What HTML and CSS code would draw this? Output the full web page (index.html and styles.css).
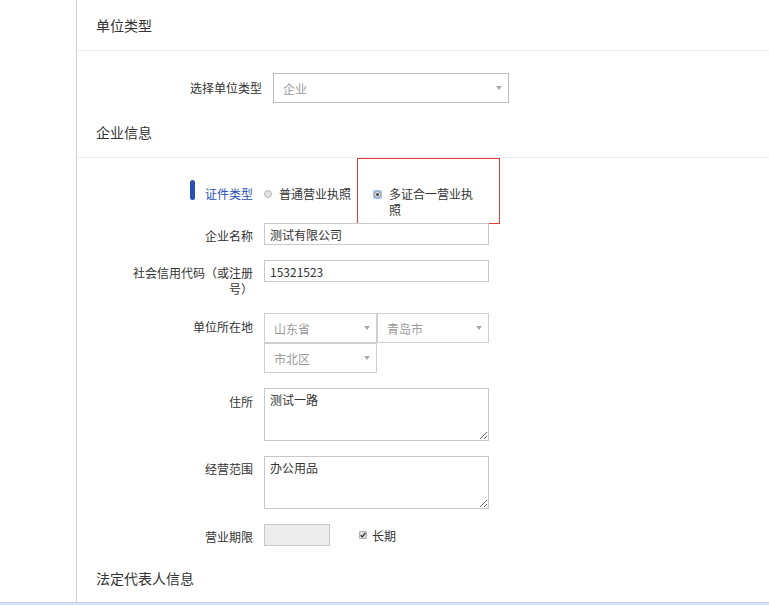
FILE: index.html
```html
<!DOCTYPE html>
<html lang="zh-CN">
<head>
<meta charset="utf-8">
<title>单位信息</title>
<link rel="stylesheet" href="styles.css">
</head>
<body>
<div class="page">
  <div class="gutter"></div>
  <div class="main">
    <div class="section-title">单位类型</div>

    <div class="row row-type">
      <div class="label label-wide">选择单位类型</div>
      <div class="select select-type"><span class="placeholder">企业</span><span class="caret"></span></div>
    </div>

    <div class="section-title title-company">企业信息</div>

    <div class="row row-cert">
      <div class="label label-cert"><span class="mark"></span><span>证件类型</span></div>
      <div class="opt opt-plain"><span class="radio"></span><span>普通营业执照</span></div>
      <div class="opt-hl">
        <svg class="radio-on" width="9" height="9" viewBox="0 0 9 9"><rect x="0" y="0" width="9" height="9" rx="2" fill="#a3c3ef"/><circle cx="4.5" cy="4.5" r="3" fill="#e6e6e6" stroke="#8a8a8a" stroke-width="0.8"/><circle cx="4.5" cy="4.5" r="1.5" fill="#444"/></svg>
        <span class="opt-text">多证合一营业执照</span>
      </div>
    </div>

    <div class="row row-name">
      <div class="label">企业名称</div>
      <input class="text-input" type="text" value="测试有限公司">
    </div>

    <div class="row row-credit">
      <div class="label">社会信用代码（或注册号）</div>
      <input class="text-input" type="text" value="15321523">
    </div>

    <div class="row row-loc">
      <div class="label">单位所在地</div>
      <div class="loc-wrap">
        <div class="select sel-a"><span class="placeholder">山东省</span><span class="caret"></span></div>
        <div class="select sel-b"><span class="placeholder">青岛市</span><span class="caret"></span></div>
        <div class="select sel-a"><span class="placeholder">市北区</span><span class="caret"></span></div>
      </div>
    </div>

    <div class="row row-addr">
      <div class="label">住所</div>
      <textarea class="text-area">测试一路</textarea>
    </div>

    <div class="row row-scope">
      <div class="label">经营范围</div>
      <textarea class="text-area">办公用品</textarea>
    </div>

    <div class="row row-term">
      <div class="label">营业期限</div>
      <input class="term-input" type="text" value="">
      <div class="long-term">
        <span class="check"><svg width="6" height="6" viewBox="0 0 6 6"><path d="M0.6 3.2 L2.3 4.9 L5.4 1" stroke="#333" stroke-width="1.3" fill="none"/></svg></span>
        <span>长期</span>
      </div>
    </div>

    <div class="section-title title-legal">法定代表人信息</div>
  </div>
</div>
<div class="strip"></div>
</body>
</html>
```

FILE: styles.css
```css
* { box-sizing: border-box; }

html, body {
  margin: 0;
  padding: 0;
  background: #fff;
}

body {
  font-family: "Noto Sans CJK SC", "Liberation Sans", sans-serif;
  font-size: 12px;
  color: #333;
  overflow: hidden;
}

.page {
  display: flex;
  height: 602px;
  overflow: hidden;
}

.gutter {
  width: 76px;
  flex: none;
}

.main {
  flex: 1;
  border-left: 1px solid #d2d2d2;
  display: flex;
  flex-direction: column;
}

.section-title {
  flex: none;
  height: 51px;
  line-height: 50px;
  padding-left: 19px;
  font-size: 14px;
  color: #333;
  border-bottom: 1px solid #ececec;
}

.title-company { margin-top: 4px; }
.title-legal { margin-top: 7px; }

.row {
  display: flex;
  flex: none;
  gap: 11px;
  align-items: flex-start;
}

.label {
  width: 176px;
  flex: none;
  padding-left: 50px;
  text-align: right;
  line-height: 16px;
  color: #333;
}

.label-wide { width: 185px; }

/* select-type row */
.row-type { margin-top: 22px; }
.row-type .label { padding-top: 7px; }

.select {
  display: flex;
  align-items: center;
  height: 30px;
  border: 1px solid #cfcfcf;
  padding: 0 6px 0 9px;
  color: #9a9a9a;
  background: #fff;
}

.select-type {
  width: 236px;
  border-color: #bdbdbd;
}

.caret {
  margin-left: auto;
  width: 0;
  height: 0;
  border-left: 3px solid transparent;
  border-right: 3px solid transparent;
  border-top: 4px solid #a8a8a8;
}

/* certificate type row */
.row-cert {
  height: 65px;
  gap: 0;
}

.label-cert {
  display: flex;
  justify-content: flex-end;
  align-items: flex-end;
  padding-top: 22px;
  color: #2b4fb5;
}

.mark {
  display: block;
  width: 5px;
  height: 20px;
  border-radius: 3px;
  background: #2b4fb8;
  margin-right: 10px;
  margin-bottom: 2px;
}

.opt {
  display: flex;
  align-items: center;
  line-height: 16px;
  padding-top: 28px;
}

.opt-plain { margin-left: 11px; }

.radio {
  width: 8px;
  height: 8px;
  border-radius: 50%;
  border: 1px solid #b8b8b8;
  background: #e2e2e2;
  margin-right: 7px;
}

.opt-hl {
  margin-left: 6px;
  width: 143px;
  height: 66px;
  flex: none;
  border: 1px solid #e63a3a;
  padding: 27px 0 0 15px;
  display: flex;
  align-items: flex-start;
}

.radio-on {
  flex: none;
  margin-top: 4px;
  margin-right: 7px;
}

.opt-text {
  width: 90px;
  line-height: 16px;
}

/* text inputs */
.text-input {
  width: 225px;
  height: 22px;
  border: 1px solid #c8c8c8;
  padding: 0 5px;
  font-family: "Noto Sans CJK SC", "Liberation Sans", sans-serif;
  font-size: 12px;
  color: #333;
  line-height: 20px;
  outline: none;
  margin: 0;
}

.row-name .label { padding-top: 5px; }

.row-credit { margin-top: 15px; }
.row-credit .label { padding-top: 5px; }

/* location */
.row-loc { margin-top: 16px; }
.row-loc .label { padding-top: 6px; }

.loc-wrap {
  width: 225px;
  display: flex;
  flex-wrap: wrap;
}

.sel-a { width: 113px; }
.sel-b { width: 112px; }

/* textareas */
.row-addr { margin-top: 15px; }
.row-addr .label { padding-top: 6px; }

.row-scope { margin-top: 15px; }
.row-scope .label { padding-top: 5px; }

.text-area {
  width: 225px;
  height: 53px;
  margin: 0;
  border: 1px solid #c8c8c8;
  padding: 3px 5px;
  font-family: "Noto Sans CJK SC", "Liberation Sans", sans-serif;
  font-size: 12px;
  line-height: 16px;
  color: #333;
  outline: none;
}

/* term */
.row-term { margin-top: 15px; }
.row-term .label { padding-top: 5px; }

.term-input {
  width: 66px;
  height: 22px;
  margin: 0;
  border: 1px solid #c8c8c8;
  background: #ececec;
  outline: none;
}

.long-term {
  display: flex;
  align-items: center;
  height: 22px;
  margin-left: 18px;
  color: #333;
}

.check {
  width: 8px;
  height: 8px;
  border: 1px solid #b0b0b0;
  border-radius: 1px;
  background: #dcdcdc;
  display: flex;
  align-items: center;
  justify-content: center;
  margin-right: 5px;
}

.strip {
  height: 3px;
  background: #d6e4f6;
  border-top: 1px solid #b9cfee;
}
```
